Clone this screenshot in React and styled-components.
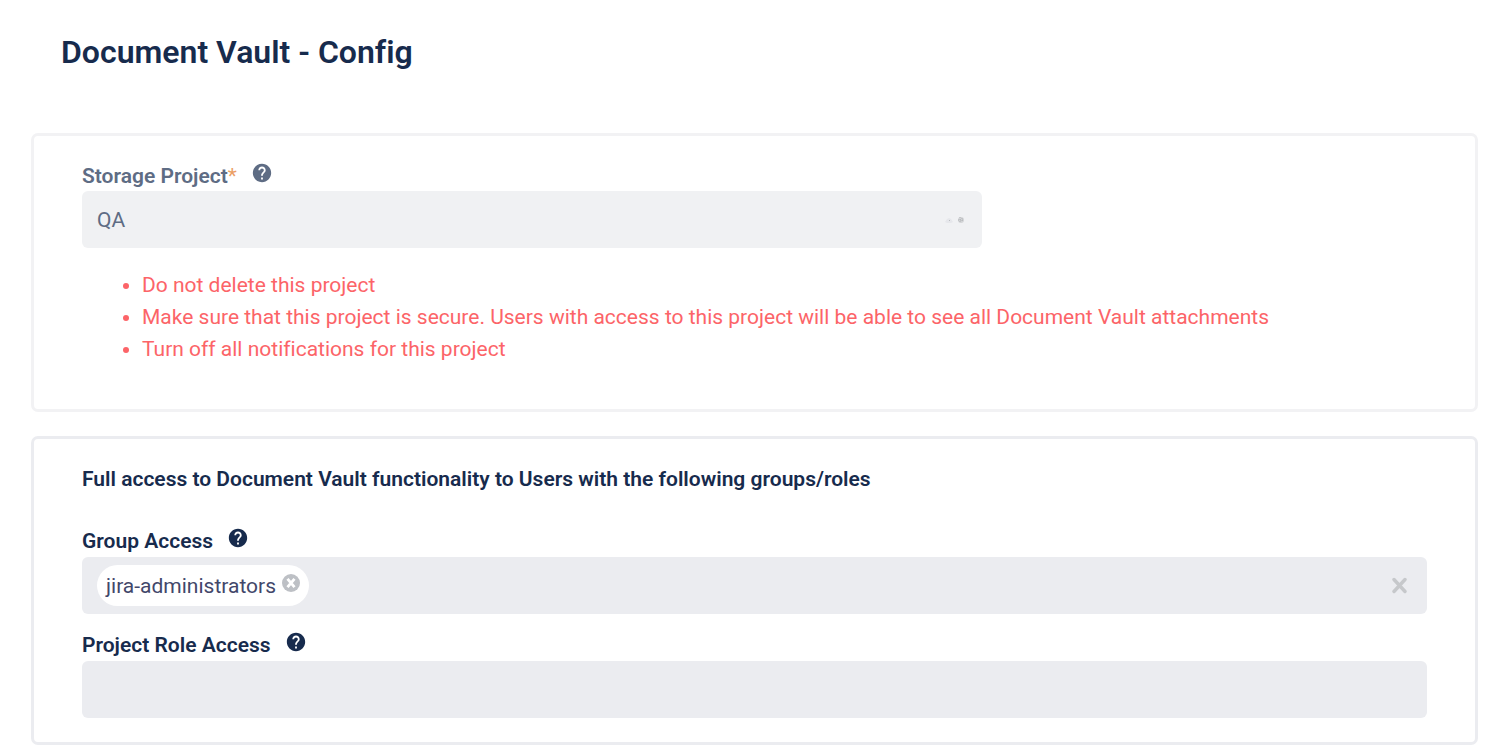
import React, { useState } from "react";
import styled, { createGlobalStyle } from "styled-components";

const GlobalStyle = createGlobalStyle`
  *, *::before, *::after { box-sizing: border-box; }
  body {
    margin: 0;
    background: #fff;
    color: #172b4d;
    font-family: Roboto, "Liberation Sans", sans-serif;
    font-size: 21px;
    line-height: 32px;
    font-variant-ligatures: none;
  }
  button, input, select { font: inherit; color: inherit; }
`;

const Page = styled.main`
  padding: 32px 29px 8px 31px;
`;

const Title = styled.h1`
  margin: 0 0 61px;
  padding-left: 30px;
  font-size: 32px;
  font-weight: 600;
  line-height: 40px;
`;

const Card = styled.section`
  margin-bottom: 24px;
  padding: ${({ $muted }) => ($muted ? "24px 48px 44px" : "24px 48px")};
  border: 3px solid ${({ $muted }) => ($muted ? "#f2f2f4" : "#ebecf0")};
  border-radius: 7px;
`;

const SectionTitle = styled.h2`
  margin: 0 0 30px;
  font-size: 21px;
  font-weight: 600;
  line-height: 32px;
`;

const LabelRow = styled.div`
  display: flex;
  align-items: flex-start;
  gap: 14px;
  height: ${({ $muted }) => ($muted ? "31px" : "32px")};
  color: ${({ $muted }) => ($muted ? "#5e6c84" : "#172b4d")};
`;

const Label = styled.label`
  font-weight: 600;
`;

const Required = styled.span`
  color: #eb9f66;
  font-weight: 400;
`;

const IconButton = styled.button`
  display: flex;
  flex: none;
  padding: 0;
  border: 0;
  background: none;
  color: inherit;
  cursor: pointer;
`;

const HelpButton = styled(IconButton)`
  padding-top: 2px;
`;

const Field = styled.div`
  display: flex;
  align-items: center;
  height: 57px;
  max-width: ${({ $narrow }) => ($narrow ? "900px" : "none")};
  padding: 0 15px;
  border-radius: 6px;
  background: ${({ $narrow }) => ($narrow ? "#f0f1f3" : "#ebecf0")};
`;

const FieldGroup = styled.div`
  & + & { margin-top: 15px; }
`;

const Select = styled.select`
  flex: 1;
  appearance: none;
  padding: 0;
  border: 0;
  background: none;
  color: #5e6c84;
  opacity: 1;
`;

const TextInput = styled.input`
  flex: 1;
  min-width: 0;
  padding: 0;
  border: 0;
  outline: 0;
  background: none;
`;

const Tag = styled.span`
  display: flex;
  align-items: center;
  gap: 6px;
  height: 41px;
  padding: 0 9px;
  border-radius: 21px;
  background: #fff;
  color: #42476a;
`;

const TagRemove = styled(IconButton)`
  margin-bottom: 6px;
`;

const ClearButton = styled(IconButton)`
  padding: 0 5px;
`;

const Warnings = styled.ul`
  margin: 21px 0 0;
  padding-left: 60px;
  color: #fc6468;
`;

function HelpIcon() {
  return (
    <svg width="22" height="22" viewBox="0 0 24 24" fill="currentColor" aria-hidden="true">
      <path d="M12 2C6.48 2 2 6.48 2 12s4.48 10 10 10 10-4.48 10-10S17.52 2 12 2zm1 17h-2v-2h2v2zm2.07-7.75-.9.92C13.45 12.9 13 13.5 13 15h-2v-.5c0-1.1.45-2.1 1.17-2.83l1.24-1.26c.37-.36.59-.86.59-1.41 0-1.1-.9-2-2-2s-2 .9-2 2H8c0-2.21 1.79-4 4-4s4 1.79 4 4c0 .88-.36 1.68-.93 2.25z" />
    </svg>
  );
}

function RemoveIcon() {
  return (
    <svg width="18" height="18" viewBox="0 0 18 18" aria-hidden="true">
      <circle cx="9" cy="9" r="9" fill="#bdc0c5" />
      <path d="M5.5 4.8 12.5 13.2M12.5 4.8 5.5 13.2" stroke="#fff" strokeWidth="2.8" />
    </svg>
  );
}

function ClearIcon() {
  return (
    <svg width="15" height="17" viewBox="0 0 15 17" aria-hidden="true">
      <path d="M2 2.5 13 14.5M13 2.5 2 14.5" stroke="#c6c8cb" strokeWidth="3.4" strokeLinecap="round" />
    </svg>
  );
}

function StatusIcon() {
  return (
    <svg width="22" height="8" viewBox="0 0 22 8" aria-hidden="true">
      <path d="M0 6 2 3l2-1 2 1 2 3-2 1H2z" fill="#e6e7eb" />
      <rect x="4" y="4" width="1" height="1" fill="#b9bcc0" />
      <circle cx="16" cy="4" r="3" fill="#d3d5d7" />
      <path d="M15 1v6M17 2v4M13 4h6" stroke="#b1b3b6" strokeWidth="1" strokeDasharray="1 1" />
    </svg>
  );
}

function FieldLabel({ id, children, muted, required }) {
  return (
    <LabelRow $muted={muted}>
      <Label htmlFor={id}>
        {children}
        {required && <Required>*</Required>}
      </Label>
      <HelpButton type="button" aria-label={`Help: ${children}`}>
        <HelpIcon />
      </HelpButton>
    </LabelRow>
  );
}

export default function App() {
  const [groups, setGroups] = useState(["jira-administrators"]);

  return (
    <>
      <GlobalStyle />
      <Page>
        <Title>Document Vault - Config</Title>

        <Card $muted>
          <FieldLabel id="storage" muted required>Storage Project</FieldLabel>
          <Field $narrow>
            <Select id="storage" disabled defaultValue="QA">
              <option>QA</option>
            </Select>
            <StatusIcon />
          </Field>
          <Warnings>
            <li>Do not delete this project</li>
            <li>
              Make sure that this project is secure. Users with access to this project will be able
              to see all Document Vault attachments
            </li>
            <li>Turn off all notifications for this project</li>
          </Warnings>
        </Card>

        <Card>
          <SectionTitle>
            Full access to Document Vault functionality to Users with the following groups/roles
          </SectionTitle>
          <FieldGroup>
            <FieldLabel id="groups">Group Access</FieldLabel>
            <Field>
              {groups.map((group) => (
                <Tag key={group}>
                  {group}
                  <TagRemove
                    type="button"
                    aria-label={`Remove ${group}`}
                    onClick={() => setGroups(groups.filter((g) => g !== group))}
                  >
                    <RemoveIcon />
                  </TagRemove>
                </Tag>
              ))}
              <TextInput id="groups" type="text" />
              <ClearButton type="button" aria-label="Clear groups" onClick={() => setGroups([])}>
                <ClearIcon />
              </ClearButton>
            </Field>
          </FieldGroup>
          <FieldGroup>
            <FieldLabel id="roles">Project Role Access</FieldLabel>
            <Field>
              <TextInput id="roles" type="text" />
            </Field>
          </FieldGroup>
        </Card>
      </Page>
    </>
  );
}
